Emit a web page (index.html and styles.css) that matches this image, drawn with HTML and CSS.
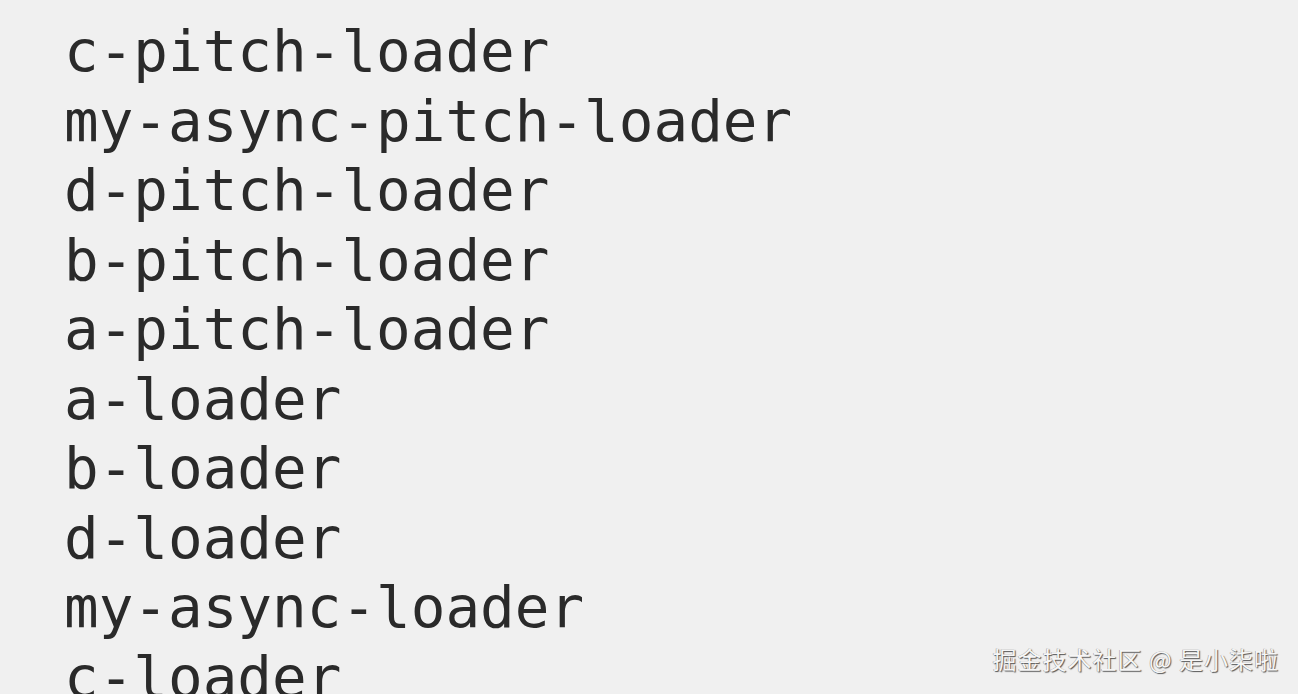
FILE: index.html
```html
<!DOCTYPE html>
<html>
<head>
<meta charset="utf-8">
<link rel="stylesheet" href="styles.css">
</head>
<body>
<div class="page">
  <pre class="code">c-pitch-loader
my-async-pitch-loader
d-pitch-loader
b-pitch-loader
a-pitch-loader
a-loader
b-loader
d-loader
my-async-loader
c-loader</pre>
  <div class="watermark">掘金技术社区 @ 是小柒啦</div>
</div>
</body>
</html>
```

FILE: styles.css
```css
html, body {
  margin: 0;
  padding: 0;
  background: #f0f0f0;
  overflow: hidden;
}
.page {
  position: relative;
  width: 1298px;
  height: 694px;
  overflow: hidden;
}
.code {
  margin: 0;
  padding: 17px 0 0 64px;
  font-family: "DejaVu Sans Mono", monospace;
  font-size: 57.6px;
  line-height: 69.5px;
  color: #2a2a2a;
}
.watermark {
  position: absolute;
  right: 19px;
  bottom: 18px;
  font-family: "Noto Sans CJK SC", sans-serif;
  font-size: 24px;
  letter-spacing: 1px;
  color: #f6f6f6;
  text-shadow: 1px 1px 1px #555, -0.5px -0.5px 0 #999;
}
```
